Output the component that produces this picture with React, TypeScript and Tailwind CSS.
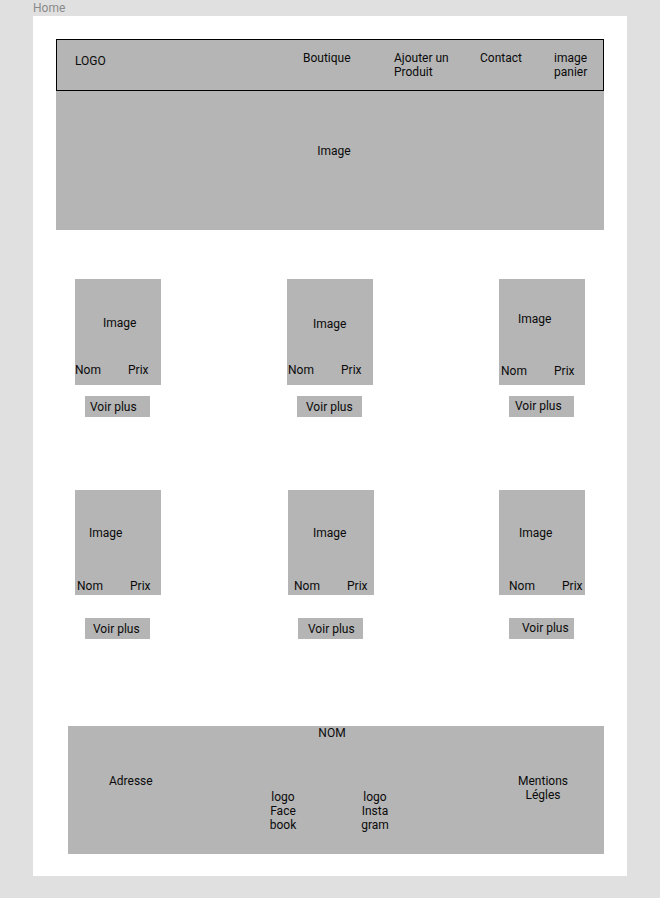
import React from "react";

type Card = {
  card: string;
  img: string;
  nomRow: string;
  nomW: string;
  btnGap: string;
  btnText: string;
  shift: string;
};

const row1: Card[] = [
  { card: "h-[106px] pt-[37px]", img: "pl-[28px]", nomRow: "mt-[33px] pl-0", nomW: "w-[53px]", btnGap: "mt-[11px]", btnText: "pl-[5px]", shift: "" },
  { card: "h-[106px] pt-[38px]", img: "pl-[26px]", nomRow: "mt-[32px] pl-[1px]", nomW: "w-[53px]", btnGap: "mt-[11px]", btnText: "pl-[9px]", shift: "" },
  { card: "h-[106px] pt-[33px]", img: "pl-[19px]", nomRow: "mt-[38px] pl-[2px]", nomW: "w-[53px]", btnGap: "mt-[11px]", btnText: "pl-[6px] pb-[2px]", shift: "" },
];

const row2: Card[] = [
  { card: "h-[105px] pt-[36px]", img: "pl-[14px]", nomRow: "mt-[39px] pl-[2px]", nomW: "w-[53px]", btnGap: "mt-[23px]", btnText: "pl-[8px]", shift: "" },
  { card: "h-[105px] pt-[36px]", img: "pl-[25px]", nomRow: "mt-[39px] pl-[6px]", nomW: "w-[53px]", btnGap: "mt-[23px]", btnText: "pl-[10px]", shift: "ml-[2px]" },
  { card: "h-[105px] pt-[36px]", img: "pl-[20px]", nomRow: "mt-[39px] pl-[10px]", nomW: "w-[53px]", btnGap: "mt-[23px]", btnText: "pl-[13px] pb-[2px]", shift: "" },
];

function Product({ c }: { c: Card }) {
  return (
    <div className={"flex flex-col w-[86px] " + c.shift}>
      <div className={"bg-[#b5b5b5] w-[86px] flex flex-col " + c.card}>
        <div className={"h-[14px] " + c.img}>Image</div>
        <div className={"flex h-[14px] " + c.nomRow}>
          <div className={c.nomW}>Nom</div>
          <div>Prix</div>
        </div>
      </div>
      <div className={"ml-[10px] w-[65px] h-[21px] bg-[#b5b5b5] flex items-center " + c.btnGap + " " + c.btnText}>
        Voir plus
      </div>
    </div>
  );
}

export default function App() {
  return (
    <div
      className="min-h-[898px] bg-[#e0e0e0] text-[12px] leading-[14px] text-[#0a0a0a]"
      style={{ fontFamily: "Roboto, 'Liberation Sans', sans-serif" }}
    >
      <div className="h-[16px] pl-[33px] text-[12px] leading-[16px] text-[#8a8a8a]">Home</div>
      <div className="ml-[33px] w-[594px] h-[860px] bg-white px-[23px] pt-[23px]">
        {/* Header */}
        <div className="h-[52px] border border-black bg-[#b5b5b5] flex items-start pt-[11px]">
          <div className="w-[246px] pl-[18px] mt-[3px]">LOGO</div>
          <div className="w-[91px]">Boutique</div>
          <div className="w-[86px]">
            Ajouter un
            <br />
            Produit
          </div>
          <div className="w-[74px]">Contact</div>
          <div>
            image
            <br />
            panier
          </div>
        </div>
        {/* Hero */}
        <div className="h-[139px] bg-[#b5b5b5] flex justify-center pl-[8px] pt-[53px]">
          <div>Image</div>
        </div>
        {/* Row 1 */}
        <div className="mt-[49px] px-[19px] flex justify-between">
          {row1.map((c, i) => (
            <Product key={i} c={c} />
          ))}
        </div>
        {/* Row 2 */}
        <div className="mt-[73px] px-[19px] flex justify-between">
          {row2.map((c, i) => (
            <Product key={i} c={c} />
          ))}
        </div>
        {/* Footer */}
        <div className="mt-[87px] ml-[12px] h-[128px] bg-[#b5b5b5] flex flex-col">
          <div className="h-[14px] flex justify-center pr-[8px]">NOM</div>
          <div className="flex">
            <div className="w-[185px] pl-[41px] mt-[34px]">Adresse</div>
            <div className="w-[60px] text-center mt-[50px]">
              logo
              <br />
              Face
              <br />
              book
            </div>
            <div className="w-[60px] ml-[32px] text-center mt-[50px]">
              logo
              <br />
              Insta
              <br />
              gram
            </div>
            <div className="w-[80px] ml-[98px] text-center mt-[34px]">
              Mentions
              <br />
              Légles
            </div>
          </div>
        </div>
      </div>
    </div>
  );
}
